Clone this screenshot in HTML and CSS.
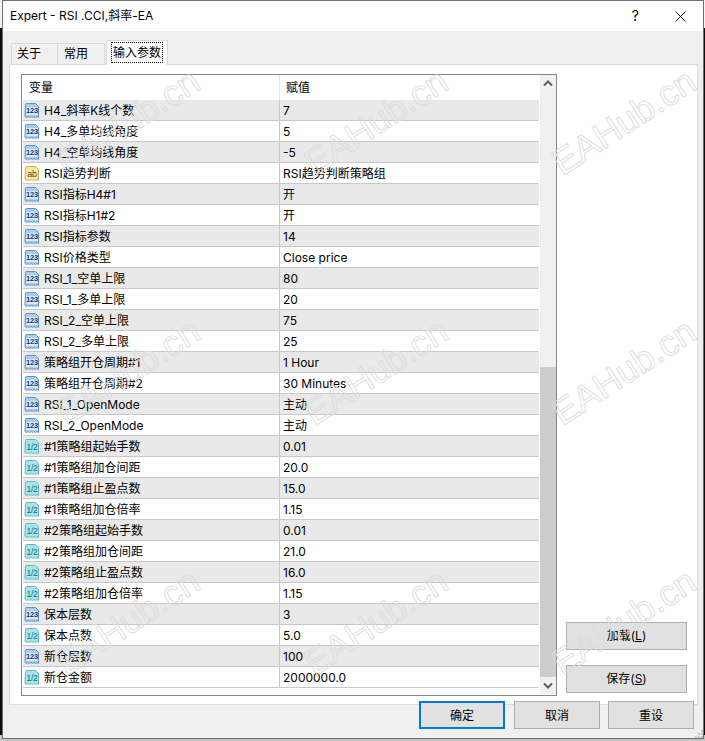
FILE: index.html
```html
<!DOCTYPE html>
<html lang="zh">
<head>
<meta charset="utf-8">
<title>Expert - RSI .CCI,斜率-EA</title>
<link rel="stylesheet" href="styles.css">
</head>
<body>
<svg class="defs" width="0" height="0">
  <symbol id="page" viewBox="0 0 16 16">
    <path d="M1.500 2.500q0-1 1-1h9l3 3v11l-1.500-1-1.500 1-1.500-1-1.500 1-1.500-1-1.500 1-1.500-1-1.500 1-1.500-1z"/>
  </symbol>
</svg>
<div class="window">
  <header class="titlebar">
    <span class="title">Expert - RSI .CCI,斜率-EA</span>
    <span class="help">?</span>
    <svg class="close" width="11" height="11" viewBox="0 0 11 11"><path d="M.5.5l10 10M10.500.5l-10 10" stroke="#111" fill="none"/></svg>
  </header>
  <nav class="tabs">
    <span class="tab">关于</span>
    <span class="tab">常用</span>
    <span class="tab active"><span class="focus">输入参数</span></span>
  </nav>
  <section class="panel">
    <div class="list">
      <div class="table">
        <div class="row head"><span class="name">变量</span><span class="val">赋值</span></div>
        <div class="row"><span class="name"><span class="ic int"><svg><use href="#page"/></svg><b>123</b></span>H4_斜率K线个数</span><span class="val">7</span></div>
        <div class="row"><span class="name"><span class="ic int"><svg><use href="#page"/></svg><b>123</b></span>H4_多单均线角度</span><span class="val">5</span></div>
        <div class="row"><span class="name"><span class="ic int"><svg><use href="#page"/></svg><b>123</b></span>H4_空单均线角度</span><span class="val">-5</span></div>
        <div class="row"><span class="name"><span class="ic str"><svg><use href="#page"/></svg><b>ab</b></span>RSI趋势判断</span><span class="val">RSI趋势判断策略组</span></div>
        <div class="row"><span class="name"><span class="ic int"><svg><use href="#page"/></svg><b>123</b></span>RSI指标H4#1</span><span class="val">开</span></div>
        <div class="row"><span class="name"><span class="ic int"><svg><use href="#page"/></svg><b>123</b></span>RSI指标H1#2</span><span class="val">开</span></div>
        <div class="row"><span class="name"><span class="ic int"><svg><use href="#page"/></svg><b>123</b></span>RSI指标参数</span><span class="val">14</span></div>
        <div class="row"><span class="name"><span class="ic int"><svg><use href="#page"/></svg><b>123</b></span>RSI价格类型</span><span class="val">Close price</span></div>
        <div class="row"><span class="name"><span class="ic int"><svg><use href="#page"/></svg><b>123</b></span>RSI_1_空单上限</span><span class="val">80</span></div>
        <div class="row"><span class="name"><span class="ic int"><svg><use href="#page"/></svg><b>123</b></span>RSI_1_多单上限</span><span class="val">20</span></div>
        <div class="row"><span class="name"><span class="ic int"><svg><use href="#page"/></svg><b>123</b></span>RSI_2_空单上限</span><span class="val">75</span></div>
        <div class="row"><span class="name"><span class="ic int"><svg><use href="#page"/></svg><b>123</b></span>RSI_2_多单上限</span><span class="val">25</span></div>
        <div class="row"><span class="name"><span class="ic int"><svg><use href="#page"/></svg><b>123</b></span>策略组开仓周期#1</span><span class="val">1 Hour</span></div>
        <div class="row"><span class="name"><span class="ic int"><svg><use href="#page"/></svg><b>123</b></span>策略组开仓周期#2</span><span class="val">30 Minutes</span></div>
        <div class="row"><span class="name"><span class="ic int"><svg><use href="#page"/></svg><b>123</b></span>RSI_1_OpenMode</span><span class="val">主动</span></div>
        <div class="row"><span class="name"><span class="ic int"><svg><use href="#page"/></svg><b>123</b></span>RSI_2_OpenMode</span><span class="val">主动</span></div>
        <div class="row"><span class="name"><span class="ic dbl"><svg><use href="#page"/></svg><b>1/2</b></span>#1策略组起始手数</span><span class="val">0.01</span></div>
        <div class="row"><span class="name"><span class="ic dbl"><svg><use href="#page"/></svg><b>1/2</b></span>#1策略组加仓间距</span><span class="val">20.0</span></div>
        <div class="row"><span class="name"><span class="ic dbl"><svg><use href="#page"/></svg><b>1/2</b></span>#1策略组止盈点数</span><span class="val">15.0</span></div>
        <div class="row"><span class="name"><span class="ic dbl"><svg><use href="#page"/></svg><b>1/2</b></span>#1策略组加仓倍率</span><span class="val">1.15</span></div>
        <div class="row"><span class="name"><span class="ic dbl"><svg><use href="#page"/></svg><b>1/2</b></span>#2策略组起始手数</span><span class="val">0.01</span></div>
        <div class="row"><span class="name"><span class="ic dbl"><svg><use href="#page"/></svg><b>1/2</b></span>#2策略组加仓间距</span><span class="val">21.0</span></div>
        <div class="row"><span class="name"><span class="ic dbl"><svg><use href="#page"/></svg><b>1/2</b></span>#2策略组止盈点数</span><span class="val">16.0</span></div>
        <div class="row"><span class="name"><span class="ic dbl"><svg><use href="#page"/></svg><b>1/2</b></span>#2策略组加仓倍率</span><span class="val">1.15</span></div>
        <div class="row"><span class="name"><span class="ic int"><svg><use href="#page"/></svg><b>123</b></span>保本层数</span><span class="val">3</span></div>
        <div class="row"><span class="name"><span class="ic dbl"><svg><use href="#page"/></svg><b>1/2</b></span>保本点数</span><span class="val">5.0</span></div>
        <div class="row"><span class="name"><span class="ic int"><svg><use href="#page"/></svg><b>123</b></span>新仓层数</span><span class="val">100</span></div>
        <div class="row"><span class="name"><span class="ic dbl"><svg><use href="#page"/></svg><b>1/2</b></span>新仓金额</span><span class="val">2000000.0</span></div>
      </div>
      <div class="scroll">
        <svg class="arrow" width="16" height="17" viewBox="0 0 16 17"><path d="M4 10.500l4-4 4 4" stroke="#606060" stroke-width="2" fill="none"/></svg>
        <div class="track"></div>
        <div class="thumb"></div>
        <svg class="arrow" width="16" height="17" viewBox="0 0 16 17"><path d="M4 6.500l4 4 4-4" stroke="#606060" stroke-width="2" fill="none"/></svg>
      </div>
    </div>
    <div class="side">
      <button class="btn side-btn">加载(<u>L</u>)</button>
      <button class="btn side-btn">保存(<u>S</u>)</button>
    </div>
  </section>
  <footer class="footer">
    <button class="btn foot-btn ok">确定</button>
    <button class="btn foot-btn">取消</button>
    <button class="btn foot-btn">重设</button>
    <svg class="grip" width="8" height="8" viewBox="0 0 8 8"><path d="M6 0h2v2H6zM3 3h2v2H3zM6 3h2v2H6zM0 6h2v2H0zM3 6h2v2H3zM6 6h2v2H6z" fill="#c4c4c4"/></svg>
  </footer>
</div>
<div class="marks">
  <span class="mark">EAHub.cn</span><span class="mark">EAHub.cn</span><span class="mark">EAHub.cn</span>
  <span class="mark">EAHub.cn</span><span class="mark">EAHub.cn</span><span class="mark">EAHub.cn</span>
  <span class="mark">EAHub.cn</span><span class="mark">EAHub.cn</span><span class="mark">EAHub.cn</span>
</div>
</body>
</html>
```
FILE: styles.css
```css
* { box-sizing: border-box; }
html, body { height: 741px; overflow: hidden; }
body {
  margin: 0;
  position: relative;
  padding-left: 2px;
  font: 12px/16px Inter, "Noto Sans CJK SC", sans-serif;
  color: #000;
  background: linear-gradient(to bottom, #f4f4f4 0 28px, #0c0c0c 28px 735px, #c4c4c4 735px);
}
.defs { position: absolute; }

.window {
  width: 702px;
  height: 739px;
  border: 1px solid #6f6f6f;
  background: #f0f0f0;
  display: flex;
  flex-direction: column;
}
.titlebar {
  height: 30px;
  flex: none;
  background: #fff;
  display: flex;
  align-items: center;
  padding: 0 17px 0 7px;
}
.title { font-size: 12px; flex: 1; }
.help { font-size: 14px; margin-right: 36px; }

.tabs {
  flex: none;
  height: 34px;
  padding-left: 8px;
  display: flex;
  align-items: flex-end;
  position: relative;
  z-index: 1;
  margin-bottom: -1px;
}
.tab {
  width: 47px;
  height: 22px;
  padding-left: 6px;
  padding-bottom: 2px;
  border: 1px solid #dadada;
  border-bottom: 0;
  border-left-width: 0;
  display: flex;
  align-items: center;
  white-space: nowrap;
}
.tab:first-child { border-left-width: 1px; padding-left: 5px; }
.tab.active {
  width: 62px;
  height: 25px;
  margin-left: 1px;
  padding: 0 0 1px 5px;
  background: #fff;
  border-left-width: 1px;
}
.focus { outline: 1px dotted #000; padding: 2px 1px 1px; line-height: 16px; }

.panel {
  flex: none;
  height: 641px;
  margin: 0 5px 0 6px;
  border: 1px solid #dcdcdc;
  background: #fff;
  padding: 9px 9px 0 11px;
  display: flex;
  gap: 9px;
}
.list {
  width: 536px;
  height: 622px;
  border: 1px solid #85858f;
  padding-left: 1px;
  display: flex;
  background: #fff;
}
.table { width: 516px; flex: none; }
.row {
  display: grid;
  grid-template-columns: 257px 1fr;
  height: 21px;
  border-bottom: 1px solid #c8c8c8;
  align-items: center;
}
.row:nth-child(even) { background: #e9e9e9; }
.row.head {
  height: 25px;
  border-bottom: 0;
  background: #fff;
}
.row.head .name { padding: 0 0 0 6px; border-right-color: #e6e6e6; }
.row.head .val { padding: 0 0 0 6px; }
.name {
  height: 100%;
  display: flex;
  align-items: center;
  padding: 2px 0 0 1px;
  border-right: 1px solid #c8c8c8;
  white-space: nowrap;
}
.val { padding: 2px 0 0 3px; white-space: nowrap; }

.ic {
  position: relative;
  width: 16px;
  height: 16px;
  margin: -2px 4px 0 0;
  flex: none;
}
.ic svg { display: block; width: 16px; height: 16px; stroke-width: 1; }
.ic b {
  position: absolute;
  left: 2px;
  top: 5px;
  width: 12px;
  height: 8px;
  font: bold 7.5px/8px "Liberation Sans", sans-serif;
  text-align: center;
  letter-spacing: -.2px;
}
.int svg { fill: #a4cdf0; stroke: #5a93cf; }
.int b { color: #123a78; background: #d8eafa; }
.dbl svg { fill: #a6e6ea; stroke: #5cbccb; }
.dbl b { color: #1a6a82; font-size: 8.5px; font-weight: normal; }
.str svg { fill: #f5e9a4; stroke: #c7b155; }
.str b { color: #5d4a10; font-size: 9px; font-weight: normal; }

.scroll {
  width: 16px;
  margin-left: 1px;
  background: #f0f0f0;
  display: flex;
  flex-direction: column;
  height: 619px;
}
.arrow { flex: none; display: block; }
.track { height: 275px; flex: none; }
.thumb { height: 310px; flex: none; background: #cdcdcd; }

.side {
  width: 121px;
  height: 622px;
  display: flex;
  flex-direction: column;
  justify-content: flex-end;
  gap: 15px;
  padding-bottom: 3px;
}
.btn {
  font: inherit;
  color: #000;
  background: #e1e1e1;
  border: 1px solid #adadad;
  padding: 0;
}
.side-btn { height: 28px; width: 121px; }
.footer {
  flex: none;
  margin-top: -4px;
  padding-right: 9px;
  display: flex;
  justify-content: flex-end;
  gap: 8px;
  position: relative;
}
.foot-btn { width: 86px; height: 28px; padding-top: 1px; }
.ok { border: 2px solid #0078d7; margin-right: 1px; }
.grip { position: absolute; right: 0; top: 29px; }

.marks {
  position: absolute;
  left: 4px;
  top: -3px;
  display: grid;
  grid-template-columns: repeat(3, 248px);
  grid-auto-rows: 250px;
  pointer-events: none;
}
.mark {
  font: 36px/46px "Liberation Sans", sans-serif;
  color: transparent;
  -webkit-text-stroke: .9px #dcdcdc;
  justify-self: center;
  align-self: center;
  transform: rotate(-33deg);
  white-space: nowrap;
}
```
